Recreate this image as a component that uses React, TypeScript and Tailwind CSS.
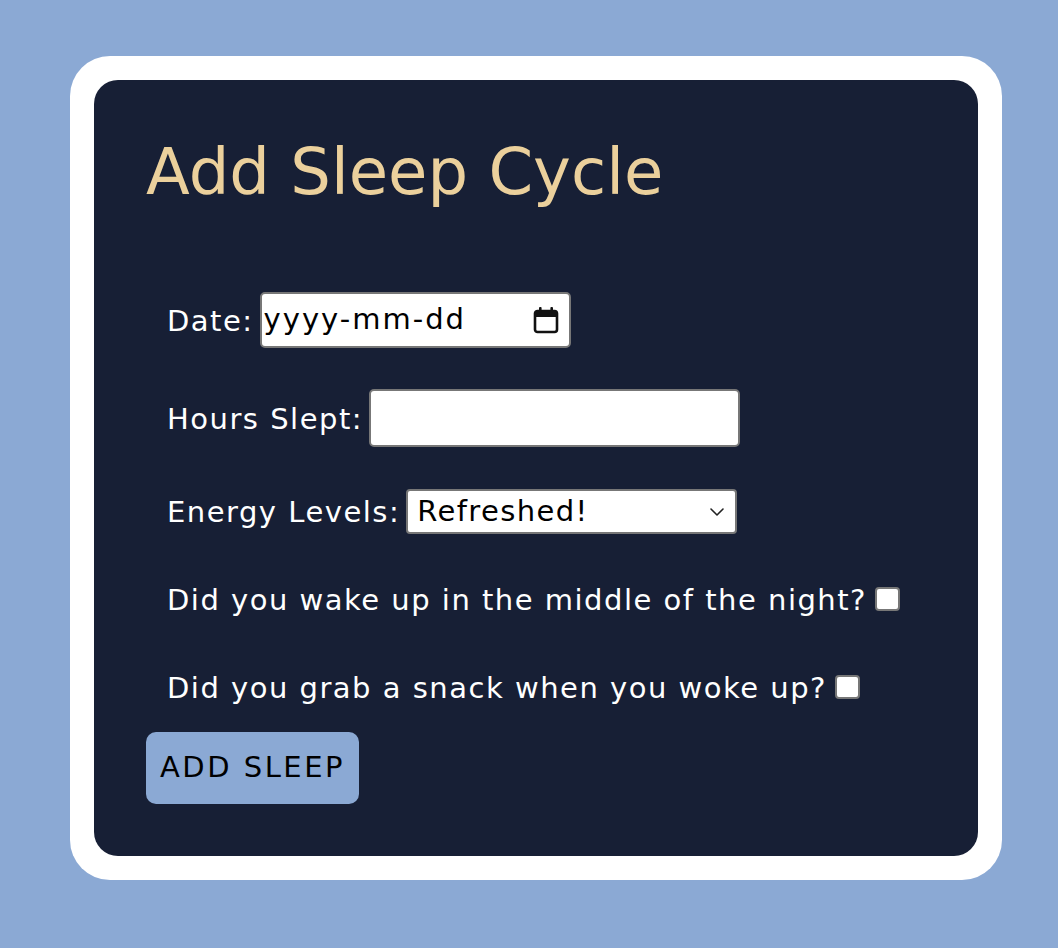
import React, { useState } from 'react';

const font = { fontFamily: '"DejaVu Sans", "Liberation Sans", sans-serif' };

const CalendarIcon = () => (
  <svg width="26" height="28" viewBox="0 0 26 28" fill="none">
    <rect x="2" y="5" width="22" height="21" rx="2.5" stroke="#111" strokeWidth="2.6" />
    <rect x="2" y="5" width="22" height="6" fill="#111" />
    <rect x="6" y="1" width="2.6" height="6" rx="1" fill="#111" />
    <rect x="17.4" y="1" width="2.6" height="6" rx="1" fill="#111" />
  </svg>
);

const Chevron = () => (
  <svg width="16" height="10" viewBox="0 0 16 10" fill="none">
    <path d="M2 2l6 6 6-6" stroke="#222" strokeWidth="1.6" strokeLinecap="round" strokeLinejoin="round" />
  </svg>
);

export default function App() {
  const [date, setDate] = useState('');
  const [hours, setHours] = useState('');
  const [energy, setEnergy] = useState('Refreshed!');
  const [woke, setWoke] = useState(false);
  const [snack, setSnack] = useState(false);

  return (
    <div className="min-h-[948px] w-full bg-[#8ba9d4] pt-[56px] pl-[70px]" style={font}>
      <div className="w-[932px] rounded-[40px] bg-white p-[24px]">
        <div className="rounded-[24px] bg-[#171f35] px-[52px] pt-[56px] pb-[52px]">
          <h1 className="text-[64px] leading-[72px] text-[#ebd09c] mb-[84px]">Add Sleep Cycle</h1>

          <form className="flex flex-col text-[29px] tracking-[1.5px] text-white" onSubmit={e => e.preventDefault()}>
            <div className="flex items-center gap-[6px] pl-[21px] h-[56px]">
              <label className="pt-[3px]">Date:</label>
              <div className="flex items-center w-[311px] h-[56px] rounded-[5px] border-2 border-[#777] bg-white pl-[2px] pr-[10px]">
                <input
                  type="text"
                  value={date}
                  onChange={e => setDate(e.target.value)}
                  placeholder="yyyy-mm-dd"
                  className="flex-1 min-w-0 bg-transparent text-[29px] tracking-[2px] text-black placeholder:text-black outline-none"
                />
                <CalendarIcon />
              </div>
            </div>

            <div className="flex items-center gap-[6px] pl-[21px] mt-[41px] h-[58px]">
              <label className="pt-[3px]">Hours Slept:</label>
              <input
                type="text"
                value={hours}
                onChange={e => setHours(e.target.value)}
                className="w-[371px] h-[58px] rounded-[5px] border-2 border-[#777] bg-white px-2 text-black outline-none"
              />
            </div>

            <div className="flex items-center gap-[6px] pl-[21px] mt-[42px] h-[45px]">
              <label className="pt-[3px]">Energy Levels:</label>
              <div className="flex items-center w-[331px] h-[45px] rounded-[4px] border-2 border-[#777] bg-white pl-[9px] pr-[10px]">
                <select
                  value={energy}
                  onChange={e => setEnergy(e.target.value)}
                  className="flex-1 min-w-0 appearance-none bg-transparent text-[29px] tracking-[1.4px] text-black outline-none"
                >
                  <option>Refreshed!</option>
                  <option>Okay</option>
                  <option>Tired</option>
                  <option>Exhausted</option>
                </select>
                <Chevron />
              </div>
            </div>

            <div className="flex items-center gap-[8px] pl-[21px] mt-[45px] h-[40px]">
              <label className="pt-[3px]">Did you wake up in the middle of the night?</label>
              <input
                type="checkbox"
                checked={woke}
                onChange={e => setWoke(e.target.checked)}
                className="appearance-none w-[25px] h-[24px] rounded-[4px] border-2 border-[#777] bg-white"
              />
            </div>

            <div className="flex items-center gap-[8px] pl-[21px] mt-[48px] h-[40px]">
              <label className="pt-[3px]">Did you grab a snack when you woke up?</label>
              <input
                type="checkbox"
                checked={snack}
                onChange={e => setSnack(e.target.checked)}
                className="appearance-none w-[25px] h-[24px] rounded-[4px] border-2 border-[#777] bg-white"
              />
            </div>

            <div className="mt-[25px]">
              <button type="submit" className="w-[213px] h-[72px] rounded-[10px] bg-[#8ba9d4] text-[29px] tracking-[2.5px] text-black">
                ADD SLEEP
              </button>
            </div>
          </form>
        </div>
      </div>
    </div>
  );
}
